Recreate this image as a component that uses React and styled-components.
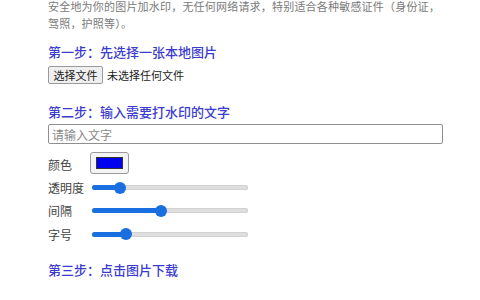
import React from "react";
import styled, { createGlobalStyle } from "styled-components";

const Global = createGlobalStyle`
  html, body { margin: 0; padding: 0; background: #fff; }
  body { font-family: "Noto Sans CJK SC", "Noto Sans", sans-serif; overflow: hidden; }
`;

const Page = styled.div`
  padding: 0 37px 0 48px;
  width: 480px;
  box-sizing: border-box;
`;

const Intro = styled.p`
  margin: -2px 0 0;
  font-size: 11px;
  line-height: 17px;
  color: #7a7a7a;
  letter-spacing: 0.2px;
`;

const Step = styled.h3`
  margin: ${(p) => p.$top}px 0 0;
  font-size: 13px;
  line-height: 18px;
  font-weight: 500;
  color: #3b3bd0;
`;

const FileRow = styled.div`
  display: flex;
  align-items: center;
  gap: 4px;
  margin-top: 5px;
  font-size: 11px;
  color: #222;
`;

const FileButton = styled.button`
  height: 18px;
  width: 55px;
  padding: 0;
  font: inherit;
  font-size: 11px;
  color: #222;
  background: #efefef;
  border: 1px solid #9a9a9a;
  border-radius: 2px;
`;

const TextInput = styled.input`
  display: block;
  box-sizing: border-box;
  width: 395px;
  height: 20px;
  margin-top: 3px;
  padding: 0 3px;
  font: inherit;
  font-size: 12px;
  border: 1px solid #8f8f8f;
  border-radius: 2px;
  outline: none;
  &::placeholder { color: #8a8a8a; }
`;

const Controls = styled.div`
  display: grid;
  grid-template-columns: 42px auto;
  grid-template-rows: 24px 23px 23px 24px;
  align-items: center;
  margin-top: 8px;
  width: 200px;
`;

const Label = styled.span`
  font-size: 12px;
  color: #444;
`;

const Swatch = styled.div`
  box-sizing: border-box;
  width: 39px;
  height: 22px;
  padding: 4px 5px;
  border: 1px solid #9a9a9a;
  border-radius: 3px;
  background: #f4f4f4;
  margin-top: -2px;
`;

const SwatchFill = styled.div`
  width: 100%;
  height: 100%;
  background: #0000f0;
  border: 1px solid #333;
  box-sizing: border-box;
`;

const Track = styled.div`
  position: relative;
  width: 156px;
  height: 5px;
  margin-left: 2px;
  border-radius: 3px;
  background: #dedede;
  box-shadow: inset 0 0 0 1px #d2d2d2;
`;

const Fill = styled.div`
  height: 100%;
  border-radius: 3px;
  background: #1a6fe0;
`;

const Thumb = styled.div`
  position: absolute;
  top: 50%;
  width: 12px;
  height: 12px;
  margin: -6px 0 0 -6px;
  border-radius: 50%;
  background: #1a6fe0;
`;

function Slider({ value }) {
  return (
    <Track>
      <Fill style={{ width: `${value}%` }} />
      <Thumb style={{ left: `${value}%` }} />
    </Track>
  );
}

export default function App() {
  return (
    <>
      <Global />
      <Page>
        <Intro>
          安全地为你的图片加水印，无任何网络请求，特别适合各种敏感证件（身份证，驾照，护照等）。
        </Intro>
        <Step $top={11}>第一步：先选择一张本地图片</Step>
        <FileRow>
          <FileButton>选择文件</FileButton>
          <span>未选择任何文件</span>
        </FileRow>
        <Step $top={19}>第二步：输入需要打水印的文字</Step>
        <TextInput placeholder="请输入文字" />
        <Controls>
          <Label>颜色</Label>
          <Swatch>
            <SwatchFill />
          </Swatch>
          <Label>透明度</Label>
          <Slider value={18} />
          <Label>间隔</Label>
          <Slider value={44} />
          <Label>字号</Label>
          <Slider value={22} />
        </Controls>
        <Step $top={15}>第三步：点击图片下载</Step>
      </Page>
    </>
  );
}
